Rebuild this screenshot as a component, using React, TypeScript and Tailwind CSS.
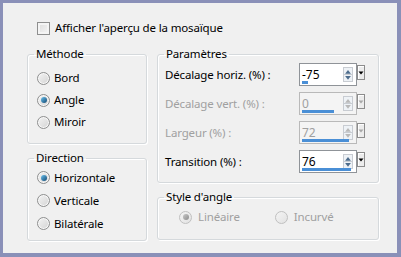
import React from "react";

const txt = "text-[11.5px] tracking-[-0.15px]";

function Radio({
  label,
  checked,
  disabled,
}: {
  label: string;
  checked?: boolean;
  disabled?: boolean;
}) {
  return (
    <div className="flex items-center">
      <span
        className={
          disabled
            ? "flex h-[13px] w-[13px] items-center justify-center rounded-full border border-[#c0c0c0] bg-gradient-to-br from-[#f4f4f4] to-[#e2e2e2]"
            : "flex h-[13px] w-[13px] items-center justify-center rounded-full border border-[#8e8f8f] bg-gradient-to-br from-[#f4f4f4] to-[#d3d3d3] shadow-[inset_0_0_0_1px_#f8f8f8]"
        }
      >
        {checked ? (
          <span
            className={
              disabled
                ? "h-[6px] w-[6px] rounded-full bg-gradient-to-br from-[#c8c8c8] to-[#8c8c8c]"
                : "h-[6px] w-[6px] rounded-full bg-gradient-to-br from-[#6cc3ef] to-[#124a74]"
            }
          />
        ) : null}
      </span>
      <span
        className={
          disabled
            ? "ml-[6px] text-[11.5px] tracking-[-0.15px] text-[#a0a0a0]"
            : "ml-[4px] text-[11.5px] tracking-[-0.15px] text-black"
        }
      >
        {label}
      </span>
    </div>
  );
}

function Group({
  title,
  className,
  children,
}: {
  title: string;
  className: string;
  children?: React.ReactNode;
}) {
  return (
    <fieldset
      className={
        "rounded-[3px] border border-[#d5d9dc] shadow-[inset_1px_1px_0_#ffffff,1px_1px_0_#ffffff] " +
        className
      }
    >
      <legend className="ml-[6px] px-[2px] text-[11.5px] leading-[16px] tracking-[-0.15px] text-black">
        {title}
      </legend>
      {children}
    </fieldset>
  );
}

function Spin({
  value,
  bar,
  disabled,
}: {
  value: string;
  bar: number;
  disabled?: boolean;
}) {
  const tri = disabled ? "#b8b8b8" : "#4d6c8c";
  return (
    <div className="flex items-start">
      <div
        className={
          disabled
            ? "relative flex h-[23px] w-[58px] items-center border border-[#b9b9b9] bg-[#f4f4f4]"
            : "relative flex h-[23px] w-[58px] items-center border border-[#8f9398] bg-white"
        }
      >
        <span
          className={
            disabled
              ? "ml-[2px] flex-1 text-[12px] text-[#a0a0a0]"
              : "ml-[2px] flex-1 text-[12px] text-black"
          }
        >
          {value}
        </span>
        <div className="mr-[3px] flex h-[15px] w-[10px] flex-col border border-[#c8ccd2] bg-[#eef2f6]">
          <svg width="8" height="6" viewBox="0 0 8 6" className="mt-[0.5px]">
            <path d="M1 5 L4 1 L7 5 Z" fill={tri} />
          </svg>
          <div className="h-px w-full bg-[#c8ccd2]" />
          <svg width="8" height="6" viewBox="0 0 8 6">
            <path d="M1 1 L4 5 L7 1 Z" fill={tri} />
          </svg>
        </div>
        <div
          className="absolute bottom-[1px] left-[2px] h-[3px] bg-[#4a8fd6]"
          style={{ width: bar }}
        />
      </div>
      <div className="mt-[2px] flex h-[15px] w-[8px] items-center justify-center border border-[#8c8c8c] bg-[#ececec] shadow-[inset_1px_1px_0_#ffffff]">
        <svg width="6" height="4" viewBox="0 0 6 4">
          <path d="M0.5 0.5 L3 3.5 L5.5 0.5 Z" fill={disabled ? "#a8a8a8" : "#000000"} />
        </svg>
      </div>
    </div>
  );
}

function Row({
  label,
  value,
  bar,
  disabled,
}: {
  label: string;
  value: string;
  bar: number;
  disabled?: boolean;
}) {
  return (
    <div className="flex h-[23px] items-center justify-between pl-[7px] pr-[13px]">
      <span className={disabled ? txt + " text-[#a0a0a0]" : txt + " text-black"}>
        {label}
      </span>
      <Spin value={value} bar={bar} disabled={disabled} />
    </div>
  );
}

export default function App() {
  return (
    <div
      className="h-[257px] w-[401px] border-t-[3px] border-r-[4px] border-b-[4px] border-l-[3px] border-[#8a90b8] bg-[#f0f0f0] pl-[24px] pt-[17px]"
      style={{ fontFamily: '"Noto Sans", "DejaVu Sans", sans-serif' }}
    >
      <div className="flex h-[16px] items-center pl-[10px]">
        <span className="h-[13px] w-[13px] border border-[#8e8f8f] bg-gradient-to-br from-[#dcdcdc] to-[#f6f6f6] shadow-[inset_0_0_0_2px_#f4f4f4]" />
        <span className={"ml-[5px] text-black " + txt}>
          Afficher l'aperçu de la mosaïque
        </span>
      </div>

      <div className="mt-[10px] flex gap-[10px]">
        <div className="flex w-[120px] flex-col gap-[6px]">
          <Group title="Méthode" className="h-[98px]">
            <div className="flex flex-col pl-[9px] pt-[5px]">
              <div className="flex h-[22px] items-center">
                <Radio label="Bord" />
              </div>
              <div className="flex h-[22px] items-center">
                <Radio label="Angle" checked />
              </div>
              <div className="flex h-[22px] items-center">
                <Radio label="Miroir" />
              </div>
            </div>
          </Group>
          <Group title="Direction" className="h-[91px]">
            <div className="flex flex-col pl-[9px]">
              <div className="flex h-[23px] items-center">
                <Radio label="Horizontale" checked />
              </div>
              <div className="flex h-[23px] items-center">
                <Radio label="Verticale" />
              </div>
              <div className="flex h-[23px] items-center">
                <Radio label="Bilatérale" />
              </div>
            </div>
          </Group>
        </div>

        <div className="flex w-[222px] flex-col gap-[6px]">
          <Group title="Paramètres" className="h-[137px]">
            <div className="flex flex-col gap-[6px] pt-[1px]">
              <Row label="Décalage horiz. (%) :" value="-75" bar={6} />
              <Row label="Décalage vert. (%) :" value="0" bar={32} disabled />
              <Row label="Largeur (%) :" value="72" bar={47} disabled />
              <Row label="Transition (%) :" value="76" bar={49} />
            </div>
          </Group>
          <Group title="Style d'angle" className="h-[51px]">
            <div className="flex h-[22px] items-center pl-[21px] pt-[2px]">
              <Radio label="Linéaire" checked disabled />
              <div className="ml-[35px]">
                <Radio label="Incurvé" disabled />
              </div>
            </div>
          </Group>
        </div>
      </div>
    </div>
  );
}
